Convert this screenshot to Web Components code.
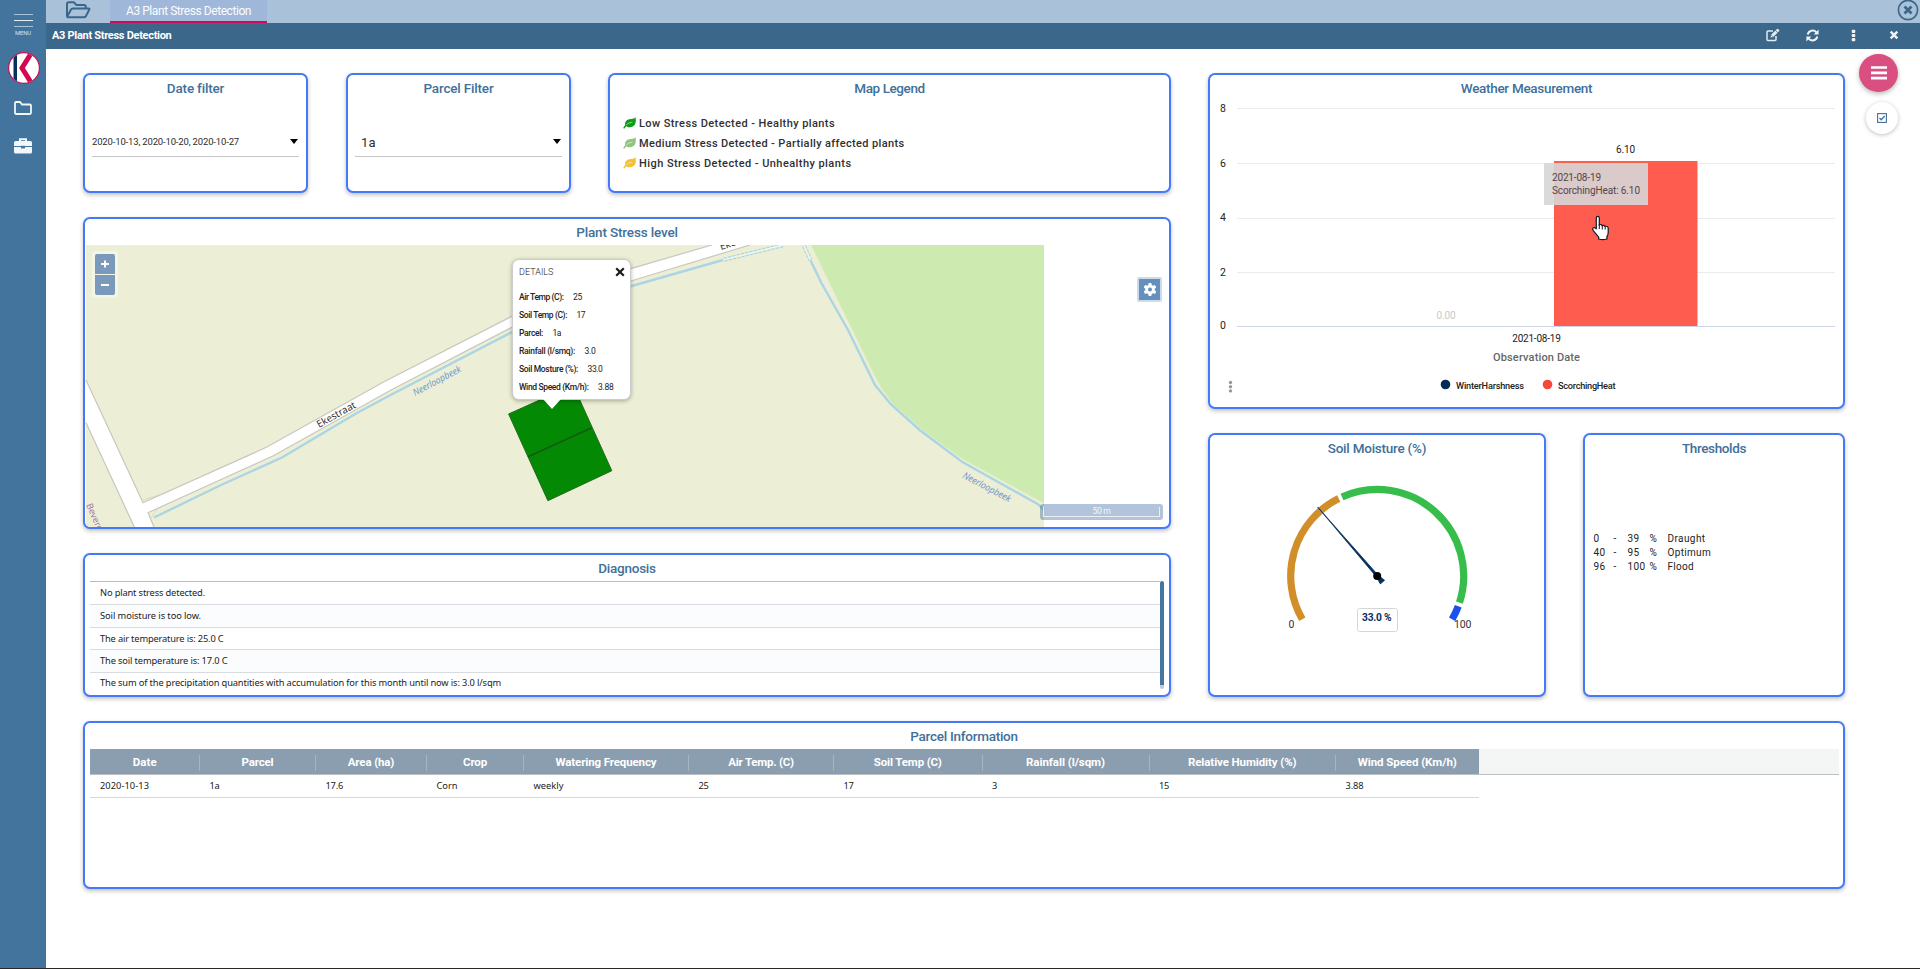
<!DOCTYPE html>
<html lang="en">
<head>
<meta charset="utf-8">
<title>A3 Plant Stress Detection</title>
<style>
html,body{margin:0;height:100%;overflow:hidden;background:#fff}
body{font-family:Roboto,"Liberation Sans",sans-serif;color:#222}
</style>
</head>
<body>
<plant-dashboard></plant-dashboard>
<script>
const define = (name, html, init) => {
  const t = document.createElement('template');
  t.innerHTML = html;
  customElements.define(name, class extends HTMLElement {
    constructor() {
      super();
      this.attachShadow({ mode: 'open' }).append(t.content.cloneNode(true));
    }
    connectedCallback() { if (init) init(this, this.shadowRoot); }
  });
};

/* Text tracked to a set width: <fit-text w="84">…</fit-text> */
define('fit-text', `<style>
:host{display:inline-block;white-space:pre}
span{display:inline-block}
</style><span><slot></slot></span>`, (el, root) => {
  const s = root.querySelector('span');
  const n = el.textContent.length;
  const w = parseFloat(el.getAttribute('w'));
  s.style.letterSpacing = '0';
  if (w && n) s.style.letterSpacing = ((w - s.getBoundingClientRect().width) / n).toFixed(3) + 'px';
});

define('side-bar', `<style>
:host{display:flex;flex-direction:column;align-items:center;width:46px;background:#42749d;box-sizing:border-box;padding:14px 0 0 0;flex:none}
svg{display:block}
.burger{width:19px;height:11px;display:flex;flex-direction:column;justify-content:space-between;border:solid #a9c3da;border-width:1.5px 0}
.burger i{height:1px;background:#e6eef5;margin:auto 0}
.menu{font-size:6px;line-height:8px;color:#d3e0eb;margin-top:2px}
.logo{margin:15px 0 0 2px}.folder{margin-top:17px}.case{margin-top:23px}
</style>
<div class="burger"><i></i></div>
<div class="menu"><fit-text w="16">MENU</fit-text></div>
<svg class="logo" width="32" height="32" viewBox="0 0 32 32"><defs><clipPath id="c"><circle cx="16" cy="16" r="14.8"/></clipPath></defs><circle cx="16" cy="16" r="15.4" fill="#fff" stroke="#cc0c55" stroke-width="1.2"/><g clip-path="url(#c)"><path d="M5.500 0h3.500v32H5.500z" fill="#06315c"/><path d="M24 0L14 16l10 16" fill="none" stroke="#d30a52" stroke-width="5"/></g></svg>
<svg class="folder" width="18" height="14" viewBox="0 0 18 14"><path d="M1 2.200q0-1.200 1.200-1.200H6l2 2.500h7.800q1.200 0 1.200 1.200v7.100q0 1.200-1.200 1.200H2.200Q1 13 1 11.800z" fill="none" stroke="#f1f5f8" stroke-width="1.800"/></svg>
<svg class="case" width="18" height="16" viewBox="0 0 18 16"><path d="M6 3V1.200h6V3" fill="none" stroke="#f3f6f8" stroke-width="2"/><path d="M1.500 3h15Q18 3 18 4.500V8H0V4.500Q0 3 1.500 3z" fill="#f3f6f8"/><path d="M0 9h18v5q0 1.500-1.500 1.500h-15Q0 15.500 0 14z" fill="#f3f6f8"/><rect x="7" y="7.800" width="4" height="2.600" fill="#42749d"/></svg>
`);

define('tab-strip', `<style>
:host{display:flex;height:23px;background:#a9c2da;justify-content:space-between;overflow:hidden}
.l{display:flex}
.open{width:64px;display:flex;padding:1px 0 0 19px;box-sizing:border-box}
.tab{width:157px;height:23px;box-sizing:border-box;border-bottom:2px solid #d2085a;background:#9fb7d8;color:#fbfcfe;font-size:12px;line-height:22px;padding-left:16px}
.close{margin:0 1px 0 0}
svg{display:block}
</style>
<div class="l"><div class="open"><svg width="27" height="18" viewBox="0 0 27 18"><path d="M2 15V3q0-1.800 1.800-1.800h5L11.500 4H19q1.800 0 1.800 1.800V7.500M2.200 15.500L6 8.600q.6-1.100 2-1.100h15.500q1.400 0 .7 1.300L21 15q-.7 1.300-2 1.300H3q-1.200 0-.8-.8z" fill="none" stroke="#3b678b" stroke-width="2"/></svg></div>
<div class="tab"><fit-text w="125">A3 Plant Stress Detection</fit-text></div></div>
<svg class="close" width="22" height="22" viewBox="0 0 22 22"><circle cx="11" cy="10" r="9.600" fill="none" stroke="#3b678b" stroke-width="1.700"/><path d="M7.500 6.500l7 7m0-7l-7 7" stroke="#3b678b" stroke-width="2.800"/></svg>
`);

define('title-bar', `<style>
:host{display:flex;height:26px;background:#3b678b;color:#fff;justify-content:space-between}
.t{font-size:11px;font-weight:700;line-height:26px;padding-left:6px}
.icons{display:flex;align-items:center;padding-right:21px}
svg{display:block;margin-top:-2px}
.a{margin-right:26px}.b{margin-right:32px}.c{margin-right:33px}
</style>
<div class="t"><fit-text w="119.500">A3 Plant Stress Detection</fit-text></div>
<div class="icons">
<svg class="a" width="14" height="14" viewBox="0 0 14 14"><path d="M7 3H2q-1 0-1 1v7.500q0 1 1 1h7q1 0 1-1V8" fill="none" stroke="#e4ebf1" stroke-width="1.500"/><path d="M4.600 9.400l.5-2.600L11 .9q.5-.5 1 0l1.200 1.200q.5.500 0 1L7.300 9z" fill="#e4ebf1"/><path d="M9.500 2.400l2.200 2.200M5.500 7.200l1.500 1.500" stroke="#3b678b" stroke-width=".8"/></svg>
<svg class="b" width="13" height="13" viewBox="0 0 13 13"><path d="M1.700 5.500A5 5 0 0 1 10.400 3.300M11.300 7.500A5 5 0 0 1 2.600 9.700" fill="none" stroke="#eef3f7" stroke-width="2"/><path d="M12.600.6v4.900H7.700zM.4 12.400V7.500h4.900z" fill="#eef3f7"/></svg>
<svg class="c" width="5" height="13" viewBox="0 0 5 13"><rect x=".7" y=".7" width="3.600" height="3.200" rx="1" fill="#eef3f7"/><rect x=".7" y="4.900" width="3.600" height="3.200" rx="1" fill="#eef3f7"/><rect x=".7" y="9.100" width="3.600" height="3.200" rx="1" fill="#eef3f7"/></svg>
<svg width="10" height="10" viewBox="0 0 10 10"><path d="M1.700 1.700l6.600 6.600m0-6.600L1.700 8.300" stroke="#eef3f7" stroke-width="2.500"/></svg>
</div>`);

define('panel-card', `<style>
:host{display:flex;flex-direction:column;box-sizing:border-box;border:2px solid #4479fb;border-radius:7px;background:#fff;box-shadow:0 2px 4px rgba(0,0,0,.25);overflow:hidden}
.t{height:26px;line-height:26px;text-align:center;font-size:13.500px;font-weight:500;color:#41709a;flex:none}
.b{flex:1;min-height:0}
</style><div class="t"><slot name="title"></slot></div><div class="b"><slot></slot></div>`);

define('select-field', `<style>
:host{display:flex;align-items:center;justify-content:space-between;height:29px;margin:26px 7px 0 7px;border-bottom:1px solid #c4c6c8;color:#2c2c2c}
i{width:0;height:0;border:4.500px solid transparent;border-top:5px solid #000;border-bottom:0;margin-right:1.500px}
</style><slot></slot><i></i>`);

define('legend-row', `<style>
:host{display:flex;align-items:center;height:20px;font-size:11px;font-weight:500;color:#303030}
svg{margin:0 3px 0 13px;flex:none}
</style><svg width="13" height="12" viewBox="0 0 13 12"><path d="M12.500.3C13.400 4 12.800 10 7 10.200 5 10.300 4 9.600 3.200 9.200 2.500 9.900 1.900 10.800 1.200 11.700L.2 10.900C1 9.500 1.600 8.900 2.200 8.100 1.600 5.500 2.800 3 6 2.300 9 1.900 11 2.200 12.500.3z" fill="currentColor"/><path d="M3.300 7.800Q5.500 5.500 9.300 5.200" stroke="#fff" stroke-opacity=".75" stroke-width=".7" fill="none"/></svg><slot></slot>`,
(el, root) => { root.querySelector('svg').style.color = el.getAttribute('leaf'); });

define('map-popup', `<style>
:host{position:absolute;left:427px;top:14px;width:119px;height:141px;box-sizing:border-box;background:#fff;border:1px solid #ccc;border-radius:7px;box-shadow:0 1px 4px rgba(0,0,0,.3);padding:3px 6px 0 6px;font-size:8.500px;color:#222}
:host::after{content:"";position:absolute;left:29.500px;top:138.500px;border:9px solid transparent;border-top:10px solid #fff;border-bottom:0}
.h{display:flex;justify-content:space-between;align-items:center;height:17px;font-size:9px;font-weight:300;margin-bottom:8px}
.r{height:18px;line-height:18px;display:flex;gap:9.500px}
b{font-weight:500}
.h svg{margin-right:-1px}
</style>
<div class="h"><fit-text w="34.500">DETAILS</fit-text><svg width="10" height="10" viewBox="0 0 10 10"><path d="M1.200 1.200l7.600 7.600m0-7.600L1.200 8.800" stroke="#1c1c1c" stroke-width="2.200"/></svg></div>
<div class="r"><b><fit-text w="44.500">Air Temp (C):</fit-text></b><fit-text w="9">25</fit-text></div>
<div class="r"><b><fit-text w="48">Soil Temp (C):</fit-text></b><fit-text w="8.500">17</fit-text></div>
<div class="r"><b><fit-text w="24">Parcel:</fit-text></b><fit-text w="8.500">1a</fit-text></div>
<div class="r"><b><fit-text w="56">Rainfall (l/smq):</fit-text></b><fit-text w="11">3.0</fit-text></div>
<div class="r"><b><fit-text w="59">Soil Mosture (%):</fit-text></b><fit-text w="15">33.0</fit-text></div>
<div class="r"><b><fit-text w="69.500">Wind Speed (Km/h):</fit-text></b><fit-text w="15.500">3.88</fit-text></div>`);

define('parcel-map', `<style>
:host{display:block;position:relative;width:1084px;height:282px}
svg{display:block}
.zoom{position:absolute;left:7px;top:6px;padding:3px;background:rgba(255,255,255,.4);border-radius:3px;display:flex;flex-direction:column;gap:1px}
.zoom div{width:20px;height:20px;background:#7b99ba;display:flex;align-items:center;justify-content:center}
.zoom div:first-child{border-radius:2px 2px 0 0}.zoom div:last-child{border-radius:0 0 2px 2px}
.gear{position:absolute;left:1052px;top:32px;width:21px;height:21px;border:2px solid #cbdbea;border-radius:2px;background:#6690bc;display:flex;align-items:center;justify-content:center}
.scale{position:absolute;left:955px;top:259px;width:123px;height:16px;box-sizing:border-box;background:rgba(0,60,136,.3);border-radius:3px;padding:3px}
.scale div{height:10px;box-sizing:border-box;border:1px solid #eee;border-top:0;color:#f6f6f6;font-size:8.500px;line-height:9px;text-align:center}
text{font-family:"Noto Sans",sans-serif}
</style>
<svg width="1084" height="282" viewBox="85 245 1084 282">
<rect x="86" y="245" width="958" height="282" fill="#ecefd5"/>
<path d="M811 245L875 376.700Q882 391 893 404L924 431.700 964 460 1044 503.300V245z" fill="#cdebb0"/>
<path d="M811 245L875 376.700Q882 391 893 404L924 431.700 964 460 1044 503.300" fill="none" stroke="#e0ecc4" stroke-width="1"/>
<path d="M143 500L168 492M158 508L151 518" stroke="#ddd8c8" fill="none"/>
<path d="M86 380L143 502.700 266.400 447.300 384 381.700 513 315.700 631.700 268.300 712 245H750L631.700 280.700 513 326.700 391 390 272.900 456 148 512.700 154 527H134.300L86 422.700z" fill="#fff"/>
<g fill="none" stroke="#c9c6bd" stroke-width="1.200"><path d="M86 380L143 502.700 266.400 447.300 384 381.700 513 315.700 631.700 268.300 712 245M750 245L631.700 280.700 513 326.700 391 390 272.900 456 148 512.700 154 527M134.300 527L86 422.700"/></g>
<g fill="none" stroke="#abd5e4" stroke-width="2.400">
<path d="M154 517.500L220 485.500 282 457.500 356 413.500 391.500 394.500 513 331.500 631.700 286 723 260"/>
<path d="M723 260L783.500 245M803.600 245L810.300 260" stroke="#a5d3e5" stroke-width="4"/>
<path d="M723 260L783.500 245M803.600 245L810.300 260" stroke="#f4f7ee" stroke-width="1.800"/>
<path d="M723 260L783.500 245M803.600 245L810.300 260" stroke="#ecefd5" stroke-width="5" stroke-dasharray="1.200 3.200"/>
<path d="M810.300 260L821.400 283 848 330 875 385 890.600 404 919.600 430 962 461.700 1038 504.300 1044 510"/>
</g>
<g font-size="10" fill="#333" stroke="#fff" stroke-width="1.500" paint-order="stroke">
<text transform="translate(319,428) rotate(-29)" textLength="43" lengthAdjust="spacingAndGlyphs">Ekestraat</text>
<text transform="translate(721,250) rotate(-17)" textLength="43" lengthAdjust="spacingAndGlyphs">Ekestraat</text></g>
<g font-size="9.500" fill="#7398cc" font-style="italic">
<text transform="translate(415,396) rotate(-28)" textLength="53" lengthAdjust="spacingAndGlyphs">Neerloopbeek</text>
<text transform="translate(962,477.500) rotate(28)" textLength="53" lengthAdjust="spacingAndGlyphs">Neerloopbeek</text></g>
<text transform="translate(86,505) rotate(66)" font-size="9" fill="#a57aa8">Beveren</text>
<path d="M508.600 414L573 385 611.800 470.700 547.900 500.700z" fill="#048904" stroke="#1f6b1a"/>
<path d="M528 456.700L591.800 427.700" stroke="#145a10" stroke-width="1.500"/>
</svg>
<div class="zoom"><div><svg width="8" height="8"><path d="M0 4h8M4 .5v7" stroke="#fff" stroke-width="2"/></svg></div><div><svg width="8" height="8"><path d="M0 4h8" stroke="#fff" stroke-width="2"/></svg></div></div>
<div class="gear"><svg width="14" height="14" viewBox="0 0 14 14"><g fill="#fff"><circle cx="7" cy="6.500" r="4.800"/><rect x="5.400" y="0" width="3.200" height="13" rx=".8"/><rect x="5.400" y="0" width="3.200" height="13" rx=".8" transform="rotate(60 7 6.500)"/><rect x="5.400" y="0" width="3.200" height="13" rx=".8" transform="rotate(120 7 6.500)"/></g><circle cx="7" cy="6.500" r="2" fill="#6690bc"/></svg></div>
<div class="scale"><div><fit-text w="18">50 m</fit-text></div></div>
<map-popup></map-popup>`);

define('diagnosis-list', `<style>
:host{display:flex;margin:0 5px 0 5px;height:108px;font-family:"Noto Sans","Open Sans",sans-serif;font-size:9.300px;color:#222}
.rows{flex:1;border-top:1px solid #b9bdc0}
.rows div{height:22px;line-height:22px;border-bottom:1px solid #d8dce0;padding-left:10px}
.rows div:nth-child(even){background:#fbfcfe}
.rows div:nth-child(3){height:21px}
.rows div:last-child{border:0;height:20px;line-height:20px}
.bar{width:4px;height:108px;border-radius:2px;background:linear-gradient(#44769f 104px,#c5c8cb 104px)}
</style>
<div class="rows"><div><fit-text w="105">No plant stress detected.</fit-text></div><div><fit-text w="101">Soil moisture is too low.</fit-text></div><div><fit-text w="123.500">The air temperature is: 25.0 C</fit-text></div><div><fit-text w="127.500">The soil temperature is: 17.0 C</fit-text></div><div><fit-text w="401">The sum of the precipitation quantities with accumulation for this month until now is: 3.0 l/sqm</fit-text></div></div><div class="bar"></div>`);

define('weather-chart', `<style>:host{display:block}svg{display:block}</style>
<svg width="633" height="306" viewBox="1210 101 633 306" font-size="10" fill="#222" text-anchor="middle">
<g stroke="#ebebeb"><path d="M1237 108.500h598M1237 163.500h598M1237 218.500h598M1237 272.500h598"/></g>
<rect x="1554" y="161" width="143.500" height="165" fill="#ff5c50"/>
<path d="M1237 326.500h598" stroke="#cdd5e6"/>
<g font-size="10.500"><text x="1223" y="112">8</text><text x="1223" y="167">6</text><text x="1223" y="220.500">4</text><text x="1223" y="275.500">2</text><text x="1223" y="329">0</text></g>
<text x="1625.500" y="153" textLength="19">6.10</text>
<text x="1446" y="319" textLength="19" fill="#c9c9c9">0.00</text>
<text x="1536.500" y="342" textLength="48.500">2021-08-19</text>
<text x="1536.500" y="360.500" font-size="11" font-weight="500" fill="#666" textLength="87">Observation Date</text>
<circle cx="1445.500" cy="384.500" r="4.800" fill="#042c58"/><circle cx="1547.500" cy="384.500" r="4.800" fill="#f9463a"/>
<g font-size="9.200" font-weight="500" fill="#222" text-anchor="start"><text x="1456" y="388.500" textLength="68">WinterHarshness</text><text x="1558" y="388.500" textLength="57.500">ScorchingHeat</text></g>
<g fill="#999"><circle cx="1230.500" cy="382.500" r="1.700"/><circle cx="1230.500" cy="386.700" r="1.700"/><circle cx="1230.500" cy="390.900" r="1.700"/></g>
<rect x="1544" y="163" width="104" height="42" fill="#d6d6d6" fill-opacity=".9"/>
<g fill="#55464a" text-anchor="start"><text x="1552" y="181" textLength="49">2021-08-19</text><text x="1552" y="194" textLength="88">ScorchingHeat: 6.10</text></g>
<path d="M1596.300 218q0-1.700 1.500-1.700t1.500 1.700v7q2.200-1.200 2.800.6 2.200-.8 2.800.8 2.800-.6 3.300 1.500v4.600q0 2.500-1.300 4v2.500q-4.400 1.400-8.200 0v-1.800l-5.200-6.200q-2-3 .8-3.500 1.200 0 2 1.800z" fill="#fff" stroke="#111827" stroke-width="1.200"/>
<path d="M1599.300 224v5M1602.300 225.500v4M1605.200 226.500v3" stroke="#111827"/>
</svg>`);

define('moisture-gauge', `<style>:host{display:block}svg{display:block}</style>
<svg width="334" height="230" viewBox="1210 461 334 230" fill="none">
<g id="arcs" stroke-width="7.200"></g>
<path id="needle" fill="#052f5c" stroke="#052f5c" stroke-width=".8"/>
<circle cx="1377.200" cy="576" r="4" fill="#000"/>
<rect x="1357.500" y="608.500" width="40" height="23" rx="2" fill="#fff" stroke="#d4d7da"/>
<g fill="#333" font-size="10.500"><text x="1288.500" y="628">0</text><text x="1454" y="628" textLength="17.500">100</text></g>
<text x="1362" y="621" font-size="10.200" font-weight="700" fill="#052f5c" textLength="29.500">33.0 %</text>
</svg>`, (el, root) => {
  const pt = (v, r) => { const a = (v * 2.4 - 120) * Math.PI / 180; return (1377.2 + r * Math.sin(a)).toFixed(2) + ' ' + (576 - r * Math.cos(a)).toFixed(2); };
  root.getElementById('arcs').innerHTML = [[0, 39, '#d18e29'], [40, 95, '#36bd4b'], [96, 100, '#1a51f0']]
    .map(([a, b, c]) => `<path d="M${pt(a, 86.5)}A86.5 86.5 0 0 1 ${pt(b, 86.5)}" stroke="${c}"/>`).join('');
  root.getElementById('needle').setAttribute('d', `M${pt(33, 91)}L${pt(70.5, 1.2)} ${pt(25, -8.5)} ${pt(41, -8.5)} ${pt(-4.5, 1.2)}z`);
});

define('threshold-list', `<style>
:host{display:grid;grid-template-columns:20px 14px 22px 18px auto;grid-auto-rows:14px;margin:71px 0 0 8.500px;line-height:14px;font-size:10px;color:#222;justify-content:start}
</style>
<span>0</span><span>-</span><fit-text w="12">39</fit-text><span>%</span><fit-text w="38">Draught</fit-text>
<fit-text w="12">40</fit-text><span>-</span><fit-text w="12">95</fit-text><span>%</span><fit-text w="43.500">Optimum</fit-text>
<fit-text w="12">96</fit-text><span>-</span><fit-text w="18">100</fit-text><span>%</span><fit-text w="26.500">Flood</fit-text>`);

define('parcel-table', `<style>
:host{display:block;margin:0 4px 0 5px}
.head{display:flex;height:25px;background:#f4f6f6;border-bottom:1px solid #b9bfc3}
.row{display:flex;height:22px;width:1389px;border-bottom:1px solid #d6d9dc}
.head span{display:flex;align-items:center;justify-content:center;background:#8a9eb0;color:#fff;font-weight:700;font-size:11.500px;position:relative;flex:none}
.head span+span::before{content:"";width:1px;height:16px;background:#a5b5c3;position:absolute;left:-.5px;top:6px}
.row span{flex:none;box-sizing:border-box;padding-left:10px;font:9.300px/21px "Noto Sans","Open Sans",sans-serif;color:#222}
</style><div class="head"></div><div class="row"></div>`, (el, root) => {
  const cols = [[109.5,'Date',24,'2020-10-13',49],[116,'Parcel',32,'1a',10],[111,'Area (ha)',46.5,'17.6',17.5],[97,'Crop',24,'Corn',21],[165,'Watering Frequency',101,'weekly',30],[145,'Air Temp. (C)',65.5,'25',10],[148.5,'Soil Temp (C)',68,'17',10],[167,'Rainfall (l/sqm)',79,'3',5],[186.5,'Relative Humidity (%)',108.5,'15',10],[143.5,'Wind Speed (Km/h)',99,'3.88',18]];
  const cell = (w, t, tw) => `<span style="width:${w}px"><fit-text w="${tw}">${t}</fit-text></span>`;
  root.querySelector('.head').innerHTML = cols.map(c => cell(c[0], c[1], c[2])).join('');
  root.querySelector('.row').innerHTML = cols.map(c => cell(c[0], c[3], c[4])).join('');
});

define('action-buttons', `<style>
:host{position:absolute;left:1859px;top:54px;width:39px}
div{border-radius:50%;display:flex;align-items:center;justify-content:center;box-shadow:0 2px 5px rgba(0,0,0,.28)}
.m{width:39px;height:38px;background:#d94f81}
.c{width:32px;height:32px;background:#fff;margin:10px 0 0 7px;box-shadow:0 1px 4px rgba(0,0,0,.25)}
</style>
<div class="m"><svg width="16" height="14"><path d="M0 1.500h16M0 6.800h16M0 12.200h16" stroke="#fff" stroke-width="2.700"/></svg></div>
<div class="c"><svg width="10" height="10" viewBox="0 0 10 10" fill="none" stroke="#41709a"><rect x=".6" y=".6" width="8.800" height="8.800" stroke-width="1.100"/><path d="M2.500 5l1.700 1.700 3.500-3.700" stroke-width="1.300"/></svg></div>`);

define('plant-dashboard', `<style>
:host{display:flex;width:1920px;height:968px;position:relative;border-bottom:1px solid #2b2724}
main{flex:1;display:flex;flex-direction:column}
.content{padding:24px 75px 0 37px;display:flex;flex-direction:column;gap:24px}
.top{display:flex;gap:37px}
.left{width:1088px;display:flex;flex-direction:column;gap:24px}
.right{flex:1;display:flex;flex-direction:column;gap:24px}
.filters{display:flex;height:120px}
.two{display:flex;justify-content:space-between;height:264px}
</style>
<side-bar></side-bar>
<main>
<tab-strip></tab-strip>
<title-bar></title-bar>
<div class="content">
<div class="top">
<div class="left">
<div class="filters">
<panel-card style="width:225px;margin-right:38px"><fit-text slot="title" w="57">Date filter</fit-text><select-field style="font-size:9.500px"><fit-text w="147">2020-10-13, 2020-10-20, 2020-10-27</fit-text></select-field></panel-card>
<panel-card style="width:225px;margin-right:37px"><fit-text slot="title" w="70">Parcel Filter</fit-text><select-field style="font-size:13px"><fit-text w="15" style="margin-left:6px;padding-top:2px">1a</fit-text></select-field></panel-card>
<panel-card style="flex:1"><fit-text slot="title" w="70.500">Map Legend</fit-text><div style="height:12px"></div>
<legend-row leaf="#0f9d17"><fit-text w="196">Low Stress Detected - Healthy plants</fit-text></legend-row>
<legend-row leaf="#93c47d"><fit-text w="265.500">Medium Stress Detected - Partially affected plants</fit-text></legend-row>
<legend-row leaf="#f1c232"><fit-text w="212.500">High Stress Detected - Unhealthy plants</fit-text></legend-row></panel-card>
</div>
<panel-card style="height:312px"><fit-text slot="title" w="101.500">Plant Stress level</fit-text><parcel-map></parcel-map></panel-card>
<panel-card style="height:144px"><fit-text slot="title" w="57.500">Diagnosis</fit-text><diagnosis-list></diagnosis-list></panel-card>
</div>
<div class="right">
<panel-card style="height:336px"><fit-text slot="title" w="131.500">Weather Measurement</fit-text><weather-chart></weather-chart></panel-card>
<div class="two">
<panel-card style="width:338px"><fit-text slot="title" w="98.500">Soil Moisture (%)</fit-text><moisture-gauge></moisture-gauge></panel-card>
<panel-card style="width:262px"><fit-text slot="title" w="64">Thresholds</fit-text><threshold-list></threshold-list></panel-card>
</div>
</div>
</div>
<panel-card style="height:168px"><fit-text slot="title" w="107.500">Parcel Information</fit-text><parcel-table></parcel-table></panel-card>
</div>
</main>
<action-buttons></action-buttons>`);
</script>
</body>
</html>
